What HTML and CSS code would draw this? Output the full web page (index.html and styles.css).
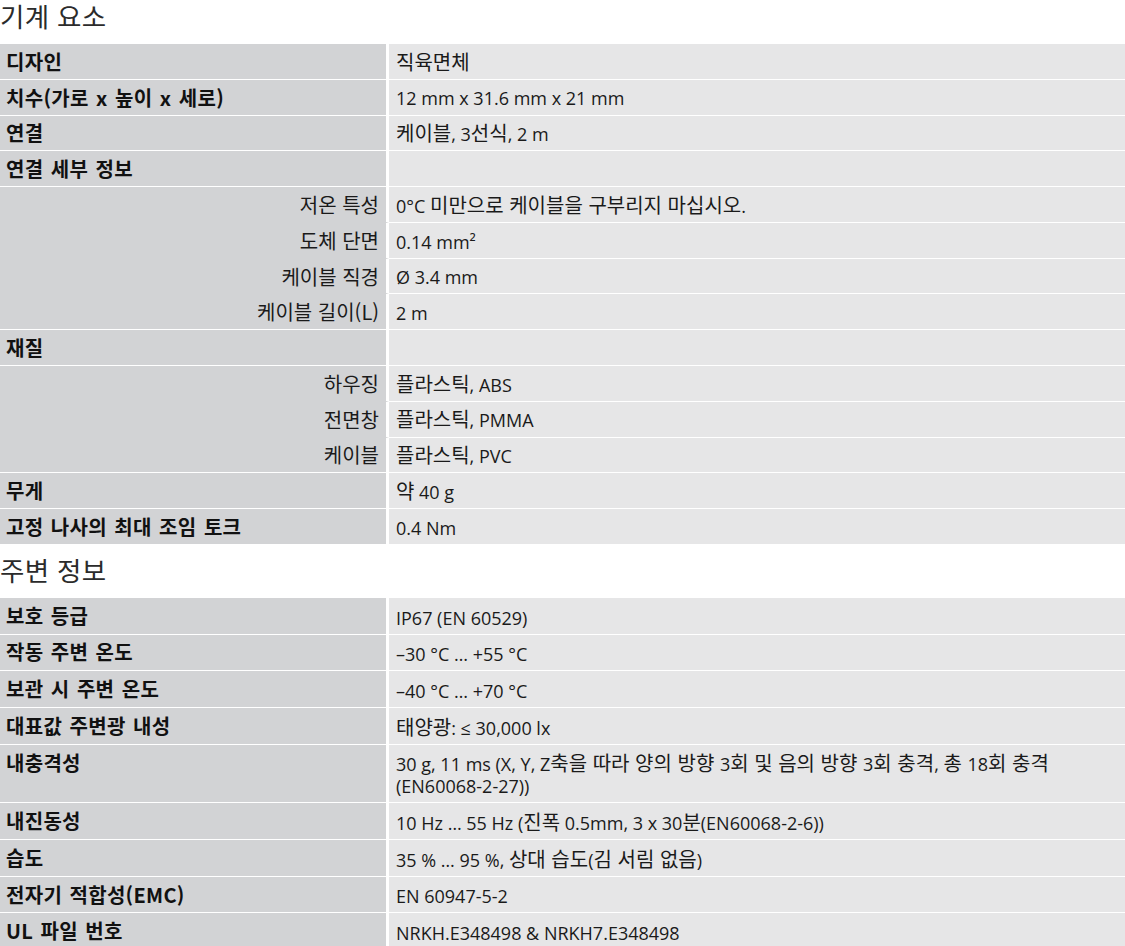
FILE: index.html
```html
<!DOCTYPE html>
<html lang="ko">
<head>
<meta charset="utf-8">
<title>기술 데이터</title>
<link rel="stylesheet" href="styles.css">
</head>
<body>
<h2 class="section-title">기계 요소</h2>
<table class="spec spec-a">
  <colgroup><col class="col-label"><col class="col-value"></colgroup>
  <tr><th>디자인</th><td><span class="k">직육면체</span></td></tr>
  <tr><th>치수(가로 x 높이 x 세로)</th><td>12 mm x 31.6 mm x 21 mm</td></tr>
  <tr><th>연결</th><td><span class="k">케이블</span>, 3<span class="k">선식</span>, 2 m</td></tr>
  <tr><th class="grp">연결 세부 정보</th><td></td></tr>
  <tr><th class="sub">저온 특성</th><td>0°C <span class="k">미만으로 케이블을 구부리지 마십시오</span>.</td></tr>
  <tr><th class="sub">도체 단면</th><td>0.14 mm²</td></tr>
  <tr><th class="sub">케이블 직경</th><td>Ø 3.4 mm</td></tr>
  <tr><th class="sub last">케이블 길이(L)</th><td>2 m</td></tr>
  <tr><th class="grp">재질</th><td></td></tr>
  <tr><th class="sub">하우징</th><td><span class="k">플라스틱</span>, ABS</td></tr>
  <tr><th class="sub">전면창</th><td><span class="k">플라스틱</span>, PMMA</td></tr>
  <tr><th class="sub last">케이블</th><td><span class="k">플라스틱</span>, PVC</td></tr>
  <tr><th>무게</th><td><span class="k">약</span> 40 g</td></tr>
  <tr><th>고정 나사의 최대 조임 토크</th><td>0.4 Nm</td></tr>
</table>
<h2 class="section-title second">주변 정보</h2>
<table class="spec spec-b">
  <colgroup><col class="col-label"><col class="col-value"></colgroup>
  <tr><th>보호 등급</th><td>IP67 (EN 60529)</td></tr>
  <tr><th>작동 주변 온도</th><td>–30 °C … +55 °C</td></tr>
  <tr><th>보관 시 주변 온도</th><td>–40 °C … +70 °C</td></tr>
  <tr><th>대표값 주변광 내성</th><td><span class="k">태양광</span>: ≤ 30,000 lx</td></tr>
  <tr><th>내충격성</th><td>30 g, 11 ms (X, Y, Z<span class="k">축을 따라 양의 방향 </span>3<span class="k">회 및 음의 방향 </span>3<span class="k">회 충격</span>, <span class="k">총 </span>18<span class="k">회 충격</span> (EN60068-2-27))</td></tr>
  <tr><th>내진동성</th><td>10 Hz … 55 Hz (<span class="k">진폭</span> 0.5mm, 3 x 30<span class="k">분</span>(EN60068-2-6))</td></tr>
  <tr><th>습도</th><td>35 % … 95 %, <span class="k">상대 습도</span>(<span class="k">김 서림 없음</span>)</td></tr>
  <tr><th>전자기 적합성(EMC)</th><td>EN 60947-5-2</td></tr>
  <tr><th>UL 파일 번호</th><td>NRKH.E348498 &amp; NRKH7.E348498</td></tr>
</table>
</body>
</html>
```
FILE: styles.css
```css
html, body {
  margin: 0;
  padding: 0;
  background: #ffffff;
}
body {
  font-family: "Noto Sans CJK KR", "Noto Sans", sans-serif;
  color: #1a1a1a;
}
.section-title {
  margin: 0 0 12px 0;
  font-size: 26.5px;
  line-height: 32px;
  font-weight: 400;
  letter-spacing: 0.3px;
  color: #2b2b2b;
}
.section-title.second {
  margin-top: 10px;
  margin-bottom: 12px;
}
.spec {
  width: 1125px;
  border-collapse: separate;
  border-spacing: 0;
  table-layout: fixed;
  font-size: 20px;
  line-height: 21px;
}
.spec-b {
  line-height: 22px;
}
.col-label { width: 389px; }
.spec th, .spec td {
  vertical-align: top;
  border-bottom: 1px solid #ffffff;
  text-align: left;
}
.spec th {
  background: #d2d3d5;
  border-right: 3px solid #ffffff;
  font-weight: 700;
  letter-spacing: 0.3px;
  word-spacing: 1.5px;
  padding: 7px 7px 7px 6px;
  color: #111111;
}
.spec td {
  background: #e6e6e7;
  font-family: "Open Sans", "Noto Sans CJK KR", sans-serif;
  font-size: 18px;
  padding: 7px 7px 7px 7px;
}
.spec td .k {
  font-family: "Noto Sans CJK KR", sans-serif;
  font-size: 20px;
  line-height: 17px;
}
.spec-a th {
  padding-top: 6.9px;
  padding-bottom: 6.9px;
}
.spec-a td {
  padding-top: 8.6px;
  padding-bottom: 5.2px;
}
.spec-b th {
  padding-top: 6.85px;
  padding-bottom: 6.85px;
}
.spec-b td {
  padding-top: 8.6px;
  padding-bottom: 5.1px;
}
.spec th.sub {
  font-weight: 400;
  text-align: right;
  letter-spacing: 0;
  word-spacing: 0;
  color: #1a1a1a;
  border-bottom-color: #d2d3d5;
}
.spec th.sub.last {
  border-bottom-color: #ffffff;
}
.spec tr:last-child th, .spec tr:last-child td {
  border-bottom: 0;
}
```
